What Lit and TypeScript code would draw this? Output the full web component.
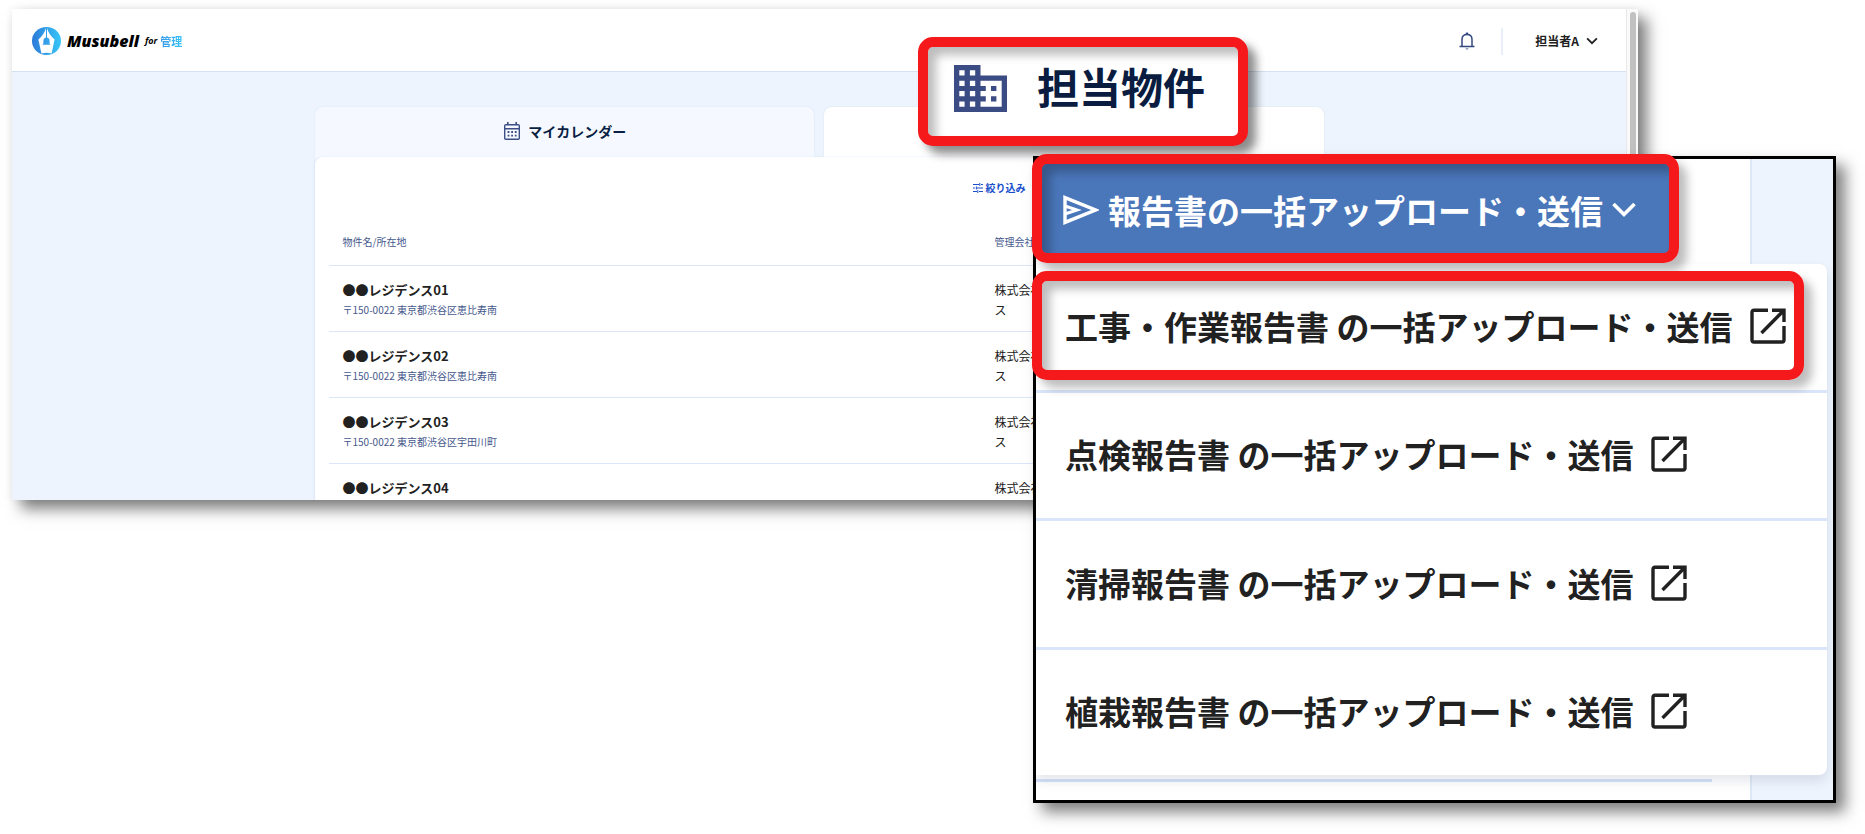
import { LitElement, html, css, svg, nothing } from "lit";
import { customElement } from "lit/decorators.js";

const properties = [
  { name: "●●レジデンス01", address: "〒150-0022 東京都渋谷区恵比寿南", company: ["株式会社", "ス"] },
  { name: "●●レジデンス02", address: "〒150-0022 東京都渋谷区恵比寿南", company: ["株式会社", "ス"] },
  { name: "●●レジデンス03", address: "〒150-0022 東京都渋谷区宇田川町", company: ["株式会社", "ス"] },
  { name: "●●レジデンス04", address: "", company: ["株式会社"] },
];

const reports = ["工事・作業報告書", "点検報告書", "清掃報告書", "植栽報告書"];

const chevron = svg`<path d="M1.5 1.5 L8 8 L14.5 1.5" fill="none" stroke="currentColor" stroke-width="2.4"/>`;

@customElement("app-root")
export class AppRoot extends LitElement {
  static styles = css`
    :host {
      display: block;
      position: relative;
      min-height: 834px;
      box-sizing: border-box;
      padding: 9px 227px 0 12px;
      overflow: hidden;
      background: #fff;
      color: #212121;
      font-family: "Noto Sans CJK JP", "Noto Sans", sans-serif;
      font-size: 12px;
      line-height: 20px;
    }
    * { box-sizing: border-box; }
    svg { display: block; flex: none; }
    button, a { font: inherit; color: inherit; text-decoration: none; }
    button { border: 0; padding: 0; background: none; cursor: pointer; }

    .window {
      display: flex;
      height: 491px;
      overflow: hidden;
      background: #edf4fd;
      box-shadow: 9px 9px 14px rgba(0, 0, 0, 0.5), 0 0 8px rgba(0, 0, 0, 0.06);
    }
    .page { flex: 1; min-width: 0; }
    .track {
      width: 12px;
      padding: 3px 2px 0 3px;
      background: #fafafa;
      border-left: 1px solid #e8e8e8;
    }
    .thumb { height: 600px; border-radius: 4px; background: #c1c1c1; }

    header {
      display: flex;
      align-items: center;
      height: 63px;
      padding: 2px 28px 0 20px;
      background: #fff;
      border-bottom: 1px solid #d3e1f0;
    }
    .brand { display: flex; align-items: center; gap: 6px; }
    .wordmark {
      font: italic 800 16px/20px "Open Sans", sans-serif;
      color: #000;
    }
    .for {
      font: italic bold 9px/20px "Open Sans", sans-serif;
      color: #000;
    }
    .product { display: flex; align-items: center; gap: 3px; }
    .kanri {
      font-size: 11px;
      font-weight: bold;
      background: linear-gradient(90deg, #3b98ea, #35c3f8);
      background-clip: text;
      color: transparent;
    }
    .tools { display: flex; align-items: center; margin-left: auto; }
    .rule { width: 2px; height: 27px; margin: 0 32px 0 26px; background: #e8eefc; }
    .user { display: flex; align-items: center; gap: 7px; font-weight: bold; }
    .bell { color: #344880; }

    .content { width: 1009px; max-width: 100%; margin: 0 auto; padding-top: 35px; }
    .tabs { display: grid; grid-template-columns: 1fr 1fr; gap: 10px; }
    .tab {
      display: flex;
      align-items: center;
      justify-content: center;
      gap: 8px;
      height: 60px;
      margin-bottom: -10px;
      padding: 0 0 12px 2px;
      border-radius: 8px 8px 0 0;
      background: #f5f9ff;
      box-shadow: 0 0 2px #d3e1f3;
      color: #0a1f44;
      font-size: 14px;
      font-weight: bold;
    }
    .tab.on { background: #fff; }
    .card {
      position: relative;
      padding: 21px 14px 0;
      border-radius: 8px 8px 0 0;
      background: #fff;
      box-shadow: -1px 0 2px #dbe6f5;
    }
    .filter {
      display: flex;
      align-items: center;
      gap: 3px;
      margin-left: 644px;
      color: #1a4fcb;
      font-size: 10px;
      font-weight: bold;
    }
    table { width: 100%; margin-top: 21px; border-collapse: collapse; table-layout: fixed; }
    th, td { padding: 0 0 0 14px; text-align: left; vertical-align: top; border-bottom: 1px solid #dbe6f8; }
    th { height: 46px; padding-top: 13px; font-size: 10px; font-weight: normal; color: #46588c; }
    td { height: 66px; padding-top: 14px; }
    .first { width: 652px; }
    .name { font-size: 13px; font-weight: bold; }
    .address { font-size: 10px; color: #46588c; }

    .frame {
      position: absolute;
      border: 10px solid #f5191c;
      border-radius: 15px;
      box-shadow: 8px 8px 10px rgba(0, 0, 0, 0.26), inset 8px 8px 10px rgba(0, 0, 0, 0.26);
      pointer-events: none;
    }
    .assigned {
      top: 37px;
      right: 617px;
      display: flex;
      align-items: center;
      gap: 30px;
      width: 330px;
      height: 109px;
      padding: 0 0 6px 26px;
      background: #fff;
      box-shadow: 8px 8px 10px rgba(0, 0, 0, 0.45), inset 8px 8px 10px rgba(0, 0, 0, 0.26);
      color: #0a1c40;
      font-size: 42px;
      font-weight: bold;
      line-height: 60px;
    }
    .assigned span { padding-bottom: 6px; }
    .assigned svg { color: #3b4b84; }
    .around-button { top: 154px; right: 186px; width: 647px; height: 109px; }
    .around-item { top: 271px; right: 61px; width: 772px; height: 109px; }

    .zoomed {
      position: absolute;
      top: 156px;
      right: 29px;
      width: 803px;
      height: 647px;
      border: 3px solid #000;
      background: #edf4fd;
      box-shadow: 9px 9px 14px rgba(0, 0, 0, 0.5);
      overflow: hidden;
      font-size: 33px;
      line-height: 48px;
      font-weight: bold;
    }
    .sheet {
      width: 716px;
      height: 100%;
      background: #fff;
      border-right: 2px solid #dde8f6;
    }
    .bulk {
      display: flex;
      align-items: center;
      gap: 9px;
      width: 636px;
      height: 94px;
      padding: 8px 0 0 27px;
      background: #4a76ba;
      color: #fff;
      font-weight: bold;
    }
    .line { width: 676px; height: 3px; margin-top: 526px; background: #d5e2f8; }
    .menu {
      position: absolute;
      top: 105px;
      left: 0;
      right: 6px;
      bottom: 25px;
      display: flex;
      flex-direction: column;
      margin: 0;
      padding: 0;
      list-style: none;
      background: #fff;
      border-radius: 0 8px 8px 0;
      box-shadow: 0 6px 12px rgba(30, 50, 90, 0.12);
    }
    .menu li { display: flex; flex: 1; }
    .menu li + li { border-top: 3px solid #d9e5fa; }
    .menu a { display: flex; flex: 1; align-items: center; gap: 17px; padding: 0 0 2px 29px; }
  `;

  render() {
    return html`
      <div class="window">
        <div class="page">
          <header>
            <div class="brand">
              <svg width="29" height="28" viewBox="0 0 29 28">
                <defs>
                  <linearGradient id="drop" x1="0" x2="1">
                    <stop offset="0" stop-color="#2c7bd8" />
                    <stop offset="1" stop-color="#38c6f8" />
                  </linearGradient>
                </defs>
                <ellipse cx="14.5" cy="14" rx="14.5" ry="14" fill="url(#drop)" />
                <path d="M14 1 Q12.5 7 6.4 12.6 L9.4 26.4 Q14.5 25 19.6 26.4 L22.6 12.6 Q16.5 7 15 1 V10.6 Q17.6 11.2 17.6 14.4 V16.4 L18.6 17.8 H10.4 L11.4 16.4 V14.4 Q11.4 11.2 14 10.6 Z" fill="#fff" />
              </svg>
              <span class="wordmark">Musubell</span>
              <span class="product"><span class="for">for</span><span class="kanri">管理</span></span>
            </div>
            <div class="tools">
              <button class="bell" aria-label="お知らせ">
                <svg width="16" height="18" viewBox="0 0 16 18" fill="none" stroke="currentColor" stroke-width="1.5">
                  <path d="M0.5 14.6 H15.5 M3 14.5 V7.4 Q3 2.4 8 2.4 Q13 2.4 13 7.4 V14.5" />
                  <path d="M8 2.4 V0.6" stroke-width="2.4" />
                  <path d="M6.4 16.4 Q8 18.4 9.6 16.4 Z" fill="currentColor" stroke="none" />
                </svg>
              </button>
              <span class="rule"></span>
              <button class="user">
                担当者A<svg width="12" height="8" viewBox="0 0 16 10">${chevron}</svg>
              </button>
            </div>
          </header>

          <div class="content">
            <div class="tabs">
              <button class="tab">
                <svg width="16" height="18" viewBox="0 0 16 18">
                  <path d="M3 0 H4.6 V2 H11.4 V0 H13 V2 H14.2 Q16 2 16 3.8 V16.2 Q16 18 14.2 18 H1.8 Q0 18 0 16.2 V3.8 Q0 2 1.8 2 H3 Z M1.4 7.4 V16.5 H14.6 V7.4 Z M1.4 3.6 V6 H14.6 V3.6 Z" fill="#3b4e86" fill-rule="evenodd" />
                  <path d="M3.6 10 H12.6 M3.6 13.6 H12.6" stroke="#3b4e86" stroke-width="1.8" stroke-dasharray="1.8 1.8" />
                </svg>
                マイカレンダー
              </button>
              <button class="tab on" aria-label="担当物件"></button>
            </div>
            <div class="card">
              <button class="filter">
                <svg width="10" height="10" viewBox="0 0 10 10" fill="none" stroke="currentColor">
                  <path d="M0 1.5 H6 M8 1.5 H10 M6.8 0 V3 M0 5 H2 M4 5 H10 M3.4 3.5 V6.5 M0 8.5 H4 M6 8.5 H10 M4.8 7 V10" />
                </svg>
                絞り込み
              </button>
              <table>
                <thead>
                  <tr><th class="first">物件名/所在地</th><th>管理会社</th></tr>
                </thead>
                <tbody>
                  ${properties.map(
                    (p) => html`<tr>
                      <td>
                        <div class="name">${p.name}</div>
                        ${p.address ? html`<div class="address">${p.address}</div>` : nothing}
                      </td>
                      <td>${p.company.map((line) => html`<div>${line}</div>`)}</td>
                    </tr>`
                  )}
                </tbody>
              </table>
            </div>
          </div>
        </div>
        <div class="track"><div class="thumb"></div></div>
      </div>

      <section class="zoomed">
        <div class="sheet">
          <button class="bulk">
            <svg width="36" height="30" viewBox="0 0 36 30" fill="none" stroke="currentColor" stroke-width="3.4">
              <path d="M2 2.6 L32.5 15 L2 27.4 Z" />
              <path d="M2 11 L14 15 L2 19" stroke-width="3" />
            </svg>
            報告書の一括アップロード・送信
            <svg width="24" height="16" viewBox="0 0 24 16" fill="none" stroke="currentColor" stroke-width="3.6">
              <path d="M1.5 2 L12 12.5 L22.5 2" />
            </svg>
          </button>
          <div class="line"></div>
        </div>
        <ul class="menu">
          ${reports.map(
            (r) => html`<li>
              <a href="#">
                <span>${r} の一括アップロード・送信</span>
                <svg width="36" height="36" viewBox="0 0 36 36" fill="none" stroke="currentColor" stroke-width="3.4">
                  <path d="M18 2.2 H4 Q2 2.2 2 4.2 V32 Q2 34 4 34 H32 Q34 34 34 32 V18" />
                  <path d="M22 2.2 H34 V14 M34 2.2 L11.5 25" />
                </svg>
              </a>
            </li>`
          )}
        </ul>
      </section>

      <div class="frame assigned">
        <svg width="53" height="47" viewBox="0 0 53 47">
          <path fill="currentColor" fill-rule="evenodd" d="M0 0 H26.5 V10.5 H53 V47 H0 Z M5.3 5.2 V10.5 H10.6 V5.2 Z M15.9 5.2 V10.5 H21.2 V5.2 Z M5.3 15.7 V21 H10.6 V15.7 Z M15.9 15.7 V21 H21.2 V15.7 Z M5.3 26.1 V31.3 H10.6 V26.1 Z M15.9 26.1 V31.3 H21.2 V26.1 Z M5.3 36.5 V41.8 H10.6 V36.5 Z M15.9 36.5 V41.8 H21.2 V36.5 Z M26.5 15.7 V21 H31.8 V26.1 H26.5 V31.3 H31.8 V36.5 H26.5 V41.8 H47.7 V15.7 Z" />
          <path fill="currentColor" d="M37 21 H42.4 V26.1 H37 Z M37 31.3 H42.4 V36.5 H37 Z" />
        </svg>
        <span>担当物件</span>
      </div>
      <div class="frame around-button"></div>
      <div class="frame around-item"></div>
    `;
  }
}
